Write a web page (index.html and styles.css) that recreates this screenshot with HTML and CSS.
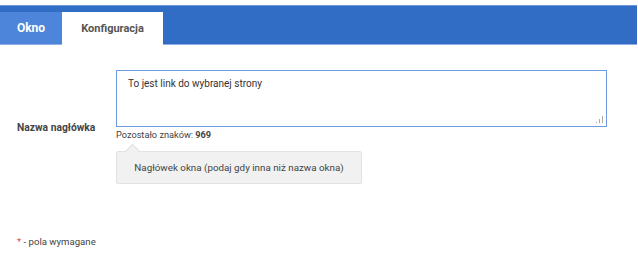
FILE: index.html
```html
<!DOCTYPE html>
<html lang="pl">
<head>
<meta charset="utf-8">
<link rel="stylesheet" href="styles.css">
</head>
<body>
<div class="topbar">
  <div class="tab tab-okno">Okno</div>
  <div class="tab tab-active">Konfiguracja</div>
</div>
<div class="content">
  <div class="row">
    <div class="label">Nazwa nagłówka</div>
    <div class="field">
      <div class="textarea">To jest link do wybranej strony<span class="grip"></span></div>
      <div class="counter">Pozostało znaków: <b>969</b></div>
      <div class="tooltip">Nagłówek okna (podaj gdy inna niż nazwa okna)</div>
    </div>
  </div>
  <div class="required"><span class="star">*</span> - pola wymagane</div>
</div>
</body>
</html>
```
FILE: styles.css
```css
html, body {
  margin: 0;
  padding: 0;
  background: #fff;
  font-family: Roboto, "Liberation Sans", sans-serif;
  color: #444;
}
.topbar {
  margin-top: 5px;
  width: 637px;
  height: 40px;
  background: #316cc5;
  border-top: 1px solid #6e97da;
  border-bottom: 1px solid #8fb0e6;
  box-sizing: border-box;
  display: flex;
  align-items: flex-end;
}
.tab {
  height: 32px;
  display: flex;
  align-items: center;
  justify-content: center;
  font-weight: 700;
}
.tab-okno {
  width: 62px;
  background: #4c85d9;
  color: #fff;
  font-size: 12px;
}
.tab-active {
  width: 101px;
  height: 33px;
  margin-bottom: -1px;
  background: #fff;
  color: #555;
  font-size: 11px;
}
.content {
  padding-top: 25px;
}
.row {
  display: flex;
  align-items: center;
}
.label {
  width: 99px;
  padding-left: 17px;
  font-size: 10.3px;
  font-weight: 700;
  color: #444;
}
.field {
  display: flex;
  flex-direction: column;
  align-items: flex-start;
}
.textarea {
  position: relative;
  width: 491px;
  height: 57px;
  box-sizing: border-box;
  border: 1px solid #6d9be2;
  padding: 6px 11px;
  font-size: 10px;
  line-height: 13px;
  color: #333;
}
.grip {
  position: absolute;
  right: 3px;
  bottom: 3px;
  width: 7px;
  height: 7px;
  background:
    linear-gradient(#aaa, #aaa) 6px 0 / 1px 7px no-repeat,
    linear-gradient(#aaa, #aaa) 3px 3px / 1px 4px no-repeat,
    linear-gradient(#aaa, #aaa) 0 6px / 1px 1px no-repeat;
}
.counter {
  margin-top: 1px;
  font-size: 9.2px;
  color: #444;
  line-height: 13px;
}
.counter b {
  font-weight: 700;
}
.tooltip {
  position: relative;
  margin-top: 10px;
  width: 246px;
  height: 33px;
  box-sizing: border-box;
  background: #f1f1f1;
  border: 1px solid #e2e2e2;
  border-radius: 2px;
  font-size: 9.8px;
  color: #444;
  display: flex;
  align-items: center;
  justify-content: center;
}
.tooltip::before {
  content: "";
  position: absolute;
  left: 10px;
  top: -6px;
  width: 10px;
  height: 10px;
  background: #f1f1f1;
  border-left: 1px solid #e2e2e2;
  border-top: 1px solid #e2e2e2;
  transform: rotate(45deg);
}
.required {
  margin-top: 52px;
  padding-left: 17px;
  font-size: 9.6px;
  color: #444;
}
.star {
  color: #d9534f;
}
```
